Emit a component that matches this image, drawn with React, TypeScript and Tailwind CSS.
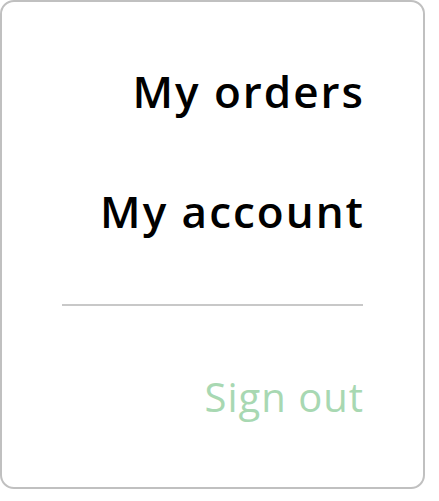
import React from 'react';

const App = () => {
  return (
    <div className="w-[439px] h-[501px] bg-white">
      <div
        className="w-[425px] h-[489px] border-2 border-[#c0c0c0] rounded-[14px] bg-white flex flex-col items-end px-[60px] pt-[65px]"
        style={{ fontFamily: '"Open Sans", "Noto Sans", sans-serif' }}
      >
        <a href="#" className="mr-[-2px] text-[44px] leading-[48px] font-semibold tracking-[2px] text-black">My orders</a>
        <a href="#" className="mr-[-2px] mt-[72px] text-[44px] leading-[48px] font-semibold tracking-[2px] text-black">My account</a>
        <div className="mt-[69px] w-full h-[2px] bg-[#c8c8c8]" />
        <a href="#" className="mr-[-1px] mt-[69px] text-[40px] leading-[44px] font-normal tracking-[1px] text-[#a8d8b2]">Sign out</a>
      </div>
    </div>
  );
};

export default App;
